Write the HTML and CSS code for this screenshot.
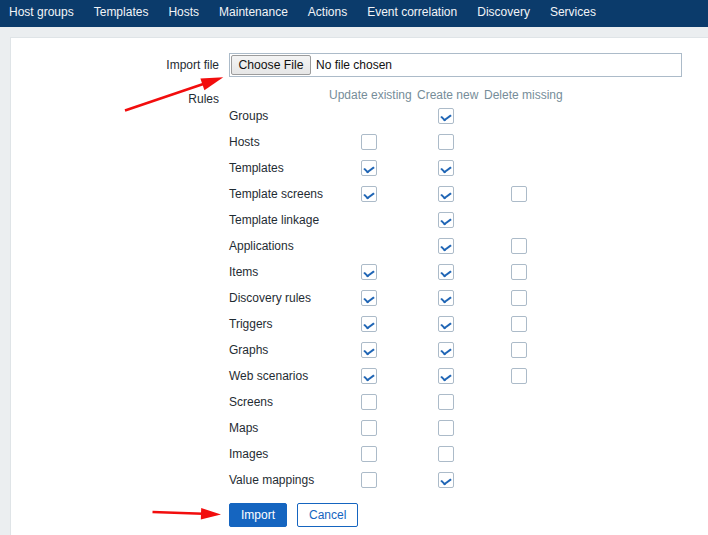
FILE: index.html
```html
<!DOCTYPE html>
<html>
<head>
<meta charset="utf-8">
<link rel="stylesheet" href="styles.css">
</head>
<body>
<nav class="topnav">
  <a>Host groups</a><a>Templates</a><a>Hosts</a><a>Maintenance</a><a>Actions</a><a>Event correlation</a><a>Discovery</a><a>Services</a>
</nav>
<main class="main">
  <div class="panel">
    <form class="form">
      <div class="lbl lbl-mid">Import file</div>
      <div class="filebox"><span class="filebtn">Choose File</span><span class="filetxt">No file chosen</span></div>

      <div class="lbl lbl-top">Rules</div>
      <table class="rules">
        <colgroup><col class="w0"><col class="w1"><col class="w2"><col class="w3"></colgroup>
        <thead><tr><th></th><th>Update existing</th><th>Create new</th><th>Delete missing</th></tr></thead>
        <tbody>
          <tr><td>Groups</td><td></td><td><span class="cb c2 on"></span></td><td></td></tr>
          <tr><td>Hosts</td><td><span class="cb c1"></span></td><td><span class="cb c2"></span></td><td></td></tr>
          <tr><td>Templates</td><td><span class="cb c1 on"></span></td><td><span class="cb c2 on"></span></td><td></td></tr>
          <tr><td>Template screens</td><td><span class="cb c1 on"></span></td><td><span class="cb c2 on"></span></td><td><span class="cb c3"></span></td></tr>
          <tr><td>Template linkage</td><td></td><td><span class="cb c2 on"></span></td><td></td></tr>
          <tr><td>Applications</td><td></td><td><span class="cb c2 on"></span></td><td><span class="cb c3"></span></td></tr>
          <tr><td>Items</td><td><span class="cb c1 on"></span></td><td><span class="cb c2 on"></span></td><td><span class="cb c3"></span></td></tr>
          <tr><td>Discovery rules</td><td><span class="cb c1 on"></span></td><td><span class="cb c2 on"></span></td><td><span class="cb c3"></span></td></tr>
          <tr><td>Triggers</td><td><span class="cb c1 on"></span></td><td><span class="cb c2 on"></span></td><td><span class="cb c3"></span></td></tr>
          <tr><td>Graphs</td><td><span class="cb c1 on"></span></td><td><span class="cb c2 on"></span></td><td><span class="cb c3"></span></td></tr>
          <tr><td>Web scenarios</td><td><span class="cb c1 on"></span></td><td><span class="cb c2 on"></span></td><td><span class="cb c3"></span></td></tr>
          <tr><td>Screens</td><td><span class="cb c1"></span></td><td><span class="cb c2"></span></td><td></td></tr>
          <tr><td>Maps</td><td><span class="cb c1"></span></td><td><span class="cb c2"></span></td><td></td></tr>
          <tr><td>Images</td><td><span class="cb c1"></span></td><td><span class="cb c2"></span></td><td></td></tr>
          <tr><td>Value mappings</td><td><span class="cb c1"></span></td><td><span class="cb c2 on"></span></td><td></td></tr>
        </tbody>
      </table>

      <div></div>
      <div class="buttons">
        <button type="button" class="btn primary">Import</button>
        <button type="button" class="btn alt">Cancel</button>
      </div>
    </form>
  </div>
</main>
<svg class="arrows" width="708" height="535" viewBox="0 0 708 535">
  <line x1="125" y1="110.5" x2="204" y2="83.8" stroke="#f20d0d" stroke-width="2.5"/>
  <polygon points="223.3,77.3 204.4,90.2 200.4,78.4" fill="#f20d0d"/>
  <line x1="152.5" y1="512" x2="203" y2="513.8" stroke="#f20d0d" stroke-width="2.5"/>
  <polygon points="221,514.5 200.8,519.6 201.2,508" fill="#f20d0d"/>
</svg>
</body>
</html>
```

FILE: styles.css
```css
html, body {
  margin: 0;
  padding: 0;
}
body {
  background: #ebeef0;
  font-family: "Liberation Sans", Arial, sans-serif;
  font-size: 12px;
  color: #1f2c33;
  overflow: hidden;
  width: 708px;
  height: 535px;
  position: relative;
  display: flex;
  flex-direction: column;
}
.topnav {
  height: 27px;
  flex: none;
  background: #0b3b6b;
  display: flex;
  gap: 20px;
  padding-left: 9px;
}
.topnav a {
  color: #f2f4f7;
  line-height: 25px;
  white-space: nowrap;
}
.main {
  flex: 1;
  min-height: 0;
  padding: 10px 0 0 10px;
  display: flex;
}
.panel {
  flex: 1;
  background: #fff;
  border-style: solid;
  border-color: #dfe4e7;
  border-width: 1px 0 0 1px;
  padding-top: 15px;
  overflow: hidden;
}
.form {
  display: grid;
  grid-template-columns: 208px 453px;
  column-gap: 10px;
  row-gap: 10px;
  align-items: start;
}
.lbl {
  text-align: right;
}
.lbl-mid {
  line-height: 24px;
}
.lbl-top {
  padding-top: 5px;
  line-height: 14px;
}
.filebox {
  height: 24px;
  box-sizing: border-box;
  border: 1px solid #acbbc9;
  display: flex;
  align-items: center;
}
.filebtn {
  margin-left: 1px;
  height: 20px;
  box-sizing: border-box;
  width: 80px;
  border: 1px solid #9c9c9c;
  border-radius: 2px;
  background: linear-gradient(#f4f4f4, #e6e6e6);
  color: #111;
  text-align: center;
  line-height: 18px;
  font-size: 12.2px;
}
.filetxt {
  margin-left: 5px;
  color: #111;
}
.rules {
  border-collapse: collapse;
  table-layout: fixed;
  width: 337px;
}
.w0 { width: 97px; }
.w1 { width: 88px; }
.w2 { width: 67px; }
.w3 { width: 85px; }
.rules th {
  font-weight: normal;
  color: #768d99;
  text-align: left;
  padding: 0 0 0 3px;
  height: 16px;
  line-height: 16px;
  white-space: nowrap;
}
.rules td {
  height: 26px;
  padding: 0;
  vertical-align: middle;
  white-space: nowrap;
}
.cb {
  display: block;
  width: 16px;
  height: 16px;
  box-sizing: border-box;
  border: 1px solid #acbbc9;
  border-radius: 2px;
  background: #fff;
  position: relative;
}
.c1 { margin-left: 35px; }
.c2 { margin-left: 24px; }
.c3 { margin-left: 30px; }
.cb.on::after {
  content: "";
  position: absolute;
  left: 4px;
  top: 2.5px;
  width: 4px;
  height: 7px;
  border-right: 2px solid #1f65b5;
  border-bottom: 2px solid #1f65b5;
  transform: rotate(45deg) skewX(-8deg);
  transform-origin: center;
}
.buttons {
  display: flex;
  gap: 10px;
}
.btn {
  height: 24px;
  box-sizing: border-box;
  font-family: "Liberation Sans", Arial, sans-serif;
  font-size: 12px;
  padding: 0 11px;
  border-radius: 2px;
  border: 1px solid #1565c0;
  margin: 0;
}
.btn.primary {
  background: #1565c0;
  color: #fff;
  width: 58px;
}
.btn.alt {
  background: #fff;
  color: #1565c0;
  width: 61px;
}
.arrows {
  position: absolute;
  left: 0;
  top: 0;
  pointer-events: none;
}
```
